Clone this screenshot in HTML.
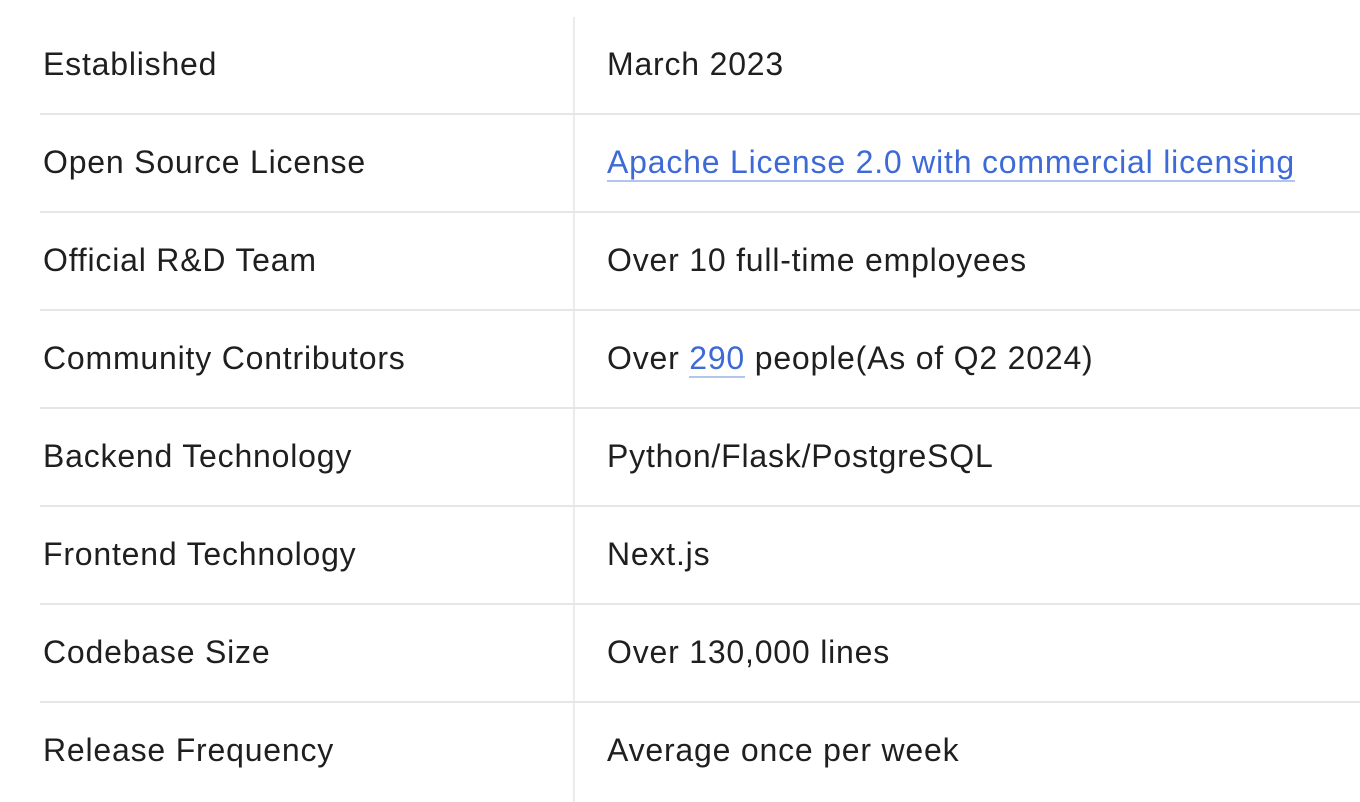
<!DOCTYPE html>
<html><head><meta charset="utf-8"><style>
html,body{margin:0;padding:0;background:#fff;width:1360px;height:802px;overflow:hidden}
body{font-family:"Liberation Sans",sans-serif;font-size:32px;letter-spacing:0.8px;color:#1f1f1f;position:relative}
.v{position:absolute;left:573px;top:17px;width:2px;height:785px;background:#ebebeb}
.h{position:absolute;left:40px;width:1320px;height:2px;background:#e6e6e6}
.t{position:absolute;white-space:nowrap;line-height:40px}
.a{left:43px}.b{left:607px}
a{color:#3d6ad6;text-decoration:none;border-bottom:2px solid #b3c5ef;padding-bottom:0}
</style></head><body>
<div class="v"></div>
<div class="h" style="top:113px"></div>
<div class="h" style="top:211px"></div>
<div class="h" style="top:309px"></div>
<div class="h" style="top:407px"></div>
<div class="h" style="top:505px"></div>
<div class="h" style="top:603px"></div>
<div class="h" style="top:701px"></div>

<div class="t a" style="top:44px">Established</div><div class="t b" style="top:44px">March 2023</div>
<div class="t a" style="top:142px">Open Source License</div><div class="t b" style="top:142px"><a>Apache License 2.0 with commercial licensing</a></div>
<div class="t a" style="top:240px">Official R&amp;D Team</div><div class="t b" style="top:240px">Over 10 full-time employees</div>
<div class="t a" style="top:338px">Community Contributors</div><div class="t b" style="top:338px">Over <a>290</a> people(As of Q2 2024)</div>
<div class="t a" style="top:436px">Backend Technology</div><div class="t b" style="top:436px">Python/Flask/PostgreSQL</div>
<div class="t a" style="top:534px">Frontend Technology</div><div class="t b" style="top:534px">Next.js</div>
<div class="t a" style="top:632px">Codebase Size</div><div class="t b" style="top:632px">Over 130,000 lines</div>
<div class="t a" style="top:730px">Release Frequency</div><div class="t b" style="top:730px">Average once per week</div>
</body></html>
